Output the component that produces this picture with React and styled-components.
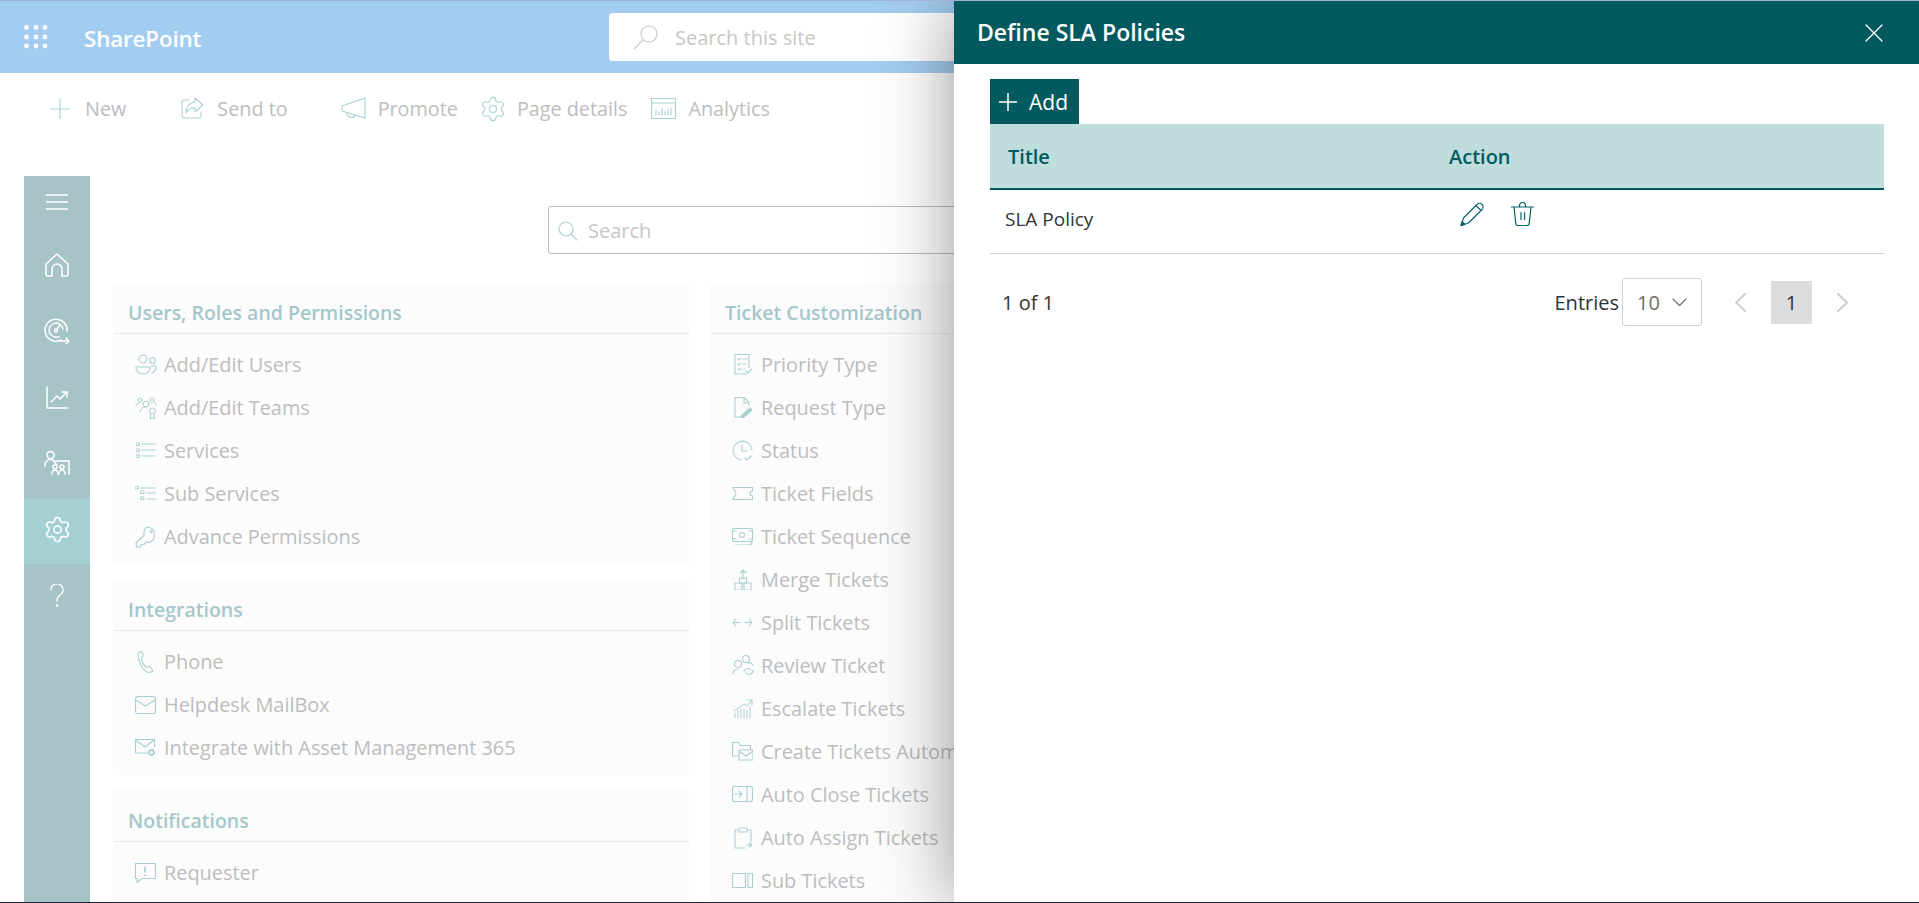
import React from 'react';
import styled, { createGlobalStyle } from 'styled-components';
import { Settings } from 'lucide-react';

const Global = createGlobalStyle`
  html, body { margin: 0; padding: 0; background: #fff; }
  * { box-sizing: border-box; }
  body { font-family: "Open Sans", "Noto Sans", sans-serif; }
`;

const Page = styled.div`
  position: relative;
  width: 1919px;
  height: 903px;
  overflow: hidden;
  background: #fff;
  border-top: 1px solid #9fb3d3;
  border-bottom: 1px solid #1c2233;
`;

const SuiteBar = styled.header`
  height: 72px;
  background: #a3cdf0;
  display: flex;
  align-items: center;
  padding-left: 24px;
`;
const Brand = styled.span`
  margin-left: 36px;
  margin-top: 2px;
  width: 119px;
  font-size: 22.3px;
  font-weight: 600;
  letter-spacing: -0.1px;
  color: #fff;
`;
const SiteSearch = styled.div`
  margin-left: 406px;
  width: 720px;
  height: 48px;
  border-radius: 4px;
  background: #fff;
  display: flex;
  align-items: center;
  padding-left: 24px;
  gap: 17px;
  font-size: 20px;
  color: #c6c6c6;
`;

const CommandBar = styled.nav`
  height: 71px;
  padding: 0 0 0 50px;
  display: flex;
  align-items: center;
  font-size: 19.8px;
  color: #bdbdbd;
`;
const Command = styled.span`
  display: flex;
  align-items: center;
  gap: ${p => p.$gap}px;
  margin-right: ${p => p.$after}px;
  color: #bdbdbd;
  svg { color: #a9cfd3; }
`;

const Main = styled.div`
  height: 758px;
  padding-top: 32px;
  padding-left: 24px;
  display: flex;
`;
const Rail = styled.aside`
  flex: none;
  width: 66px;
  height: 726px;
  background: #a6c4c6;
  display: flex;
  flex-direction: column;
  color: #fff;
`;
const RailItem = styled.div`
  height: ${p => (p.$first ? 58 : 66)}px;
  padding-bottom: ${p => (p.$first ? 6 : 4)}px;
  display: flex;
  align-items: center;
  justify-content: center;
  background: ${p => (p.$active ? '#a6cfd2' : 'transparent')};
`;

const Content = styled.section`
  flex: none;
  margin-left: 23px;
  width: 1200px;
`;
const FindBox = styled.div`
  margin-left: 435px;
  margin-top: 30px;
  width: 640px;
  height: 48px;
  border: 1px solid #bdbdbd;
  border-radius: 3px;
  display: flex;
  align-items: center;
  padding: 1px 0 0 9px;
  gap: 10px;
  font-size: 20px;
  color: #c6c6c6;
  svg { color: #a9cfd3; }
`;
const Columns = styled.div`
  margin-top: 28px;
  display: grid;
  grid-template-columns: 576px 576px;
  column-gap: 21px;
  align-items: start;
`;
const Stack = styled.div`
  display: flex;
  flex-direction: column;
  gap: 15px;
`;
const Card = styled.article`
  background: #fcfcfc;
  padding-bottom: ${p => p.$tail || 5}px;
`;
const CardTitle = styled.h3`
  margin: 0 0 10px;
  height: 52px;
  padding: 16px 0 0 15px;
  font-size: 19.5px;
  line-height: 29px;
  font-weight: 600;
  color: #a4c7ca;
  border-bottom: 1px solid #eaeaea;
`;
const Row = styled.div`
  height: 43px;
  padding: 0 0 2px 22px;
  display: flex;
  align-items: center;
  gap: 8px;
  font-size: 19.9px;
  color: #bdbdbd;
  white-space: nowrap;
  svg { color: #a9cfd3; flex: none; }
`;

const Panel = styled.aside`
  position: absolute;
  top: 0;
  bottom: 0;
  left: 954px;
  right: 0;
  background: #fff;
  box-shadow: 0 0 70px rgba(0, 0, 0, 0.42);
  display: flex;
  flex-direction: column;
`;
const PanelHead = styled.div`
  height: 63px;
  background: #025a5e;
  color: #fff;
  display: flex;
  align-items: center;
  justify-content: space-between;
  padding: 0 36px 0 23px;
`;
const PanelTitle = styled.h2`
  margin: 0 0 2px;
  font-size: 23px;
  font-weight: 600;
`;
const PanelBody = styled.div`
  padding: 15px 35px 0 36px;
`;
const AddButton = styled.button`
  display: flex;
  align-items: center;
  gap: 12px;
  height: 45px;
  width: 89px;
  padding: 0 0 0 9px;
  border: 0;
  background: #025a5e;
  color: #fff;
  font: 500 21px "Open Sans", sans-serif;
`;
const Table = styled.div``;
const HeadRow = styled.div`
  height: 66px;
  background: #bfdddc;
  border-bottom: 2px solid #025a5e;
  display: grid;
  grid-template-columns: 441px 1fr;
  align-items: center;
  padding: 0 0 0 18px;
  font-size: 20px;
  font-weight: 600;
  color: #025a5e;
`;
const BodyRow = styled.div`
  height: 64px;
  border-bottom: 1px solid #d0d0d0;
  display: grid;
  grid-template-columns: 455px 1fr;
  padding-left: 15px;
  font-size: 19px;
  color: #333;
`;
const CellText = styled.span`
  line-height: 58px;
`;
const Actions = styled.span`
  display: flex;
  gap: 27px;
  padding-top: 12px;
  color: #046166;
  svg { flex: none; }
`;
const Foot = styled.div`
  height: 48px;
  margin-top: 24px;
  display: flex;
  align-items: center;
  padding: 0 0 0 12px;
  font-size: 20px;
  color: #333;
`;
const Count = styled.span`
  flex: 1;
  padding-top: 1px;
`;
const EntriesLabel = styled.span`
  font-weight: 500;
  margin-right: 3px;
  padding-top: 1px;
`;
const PageSize = styled.div`
  width: 80px;
  height: 48px;
  border: 1px solid #d0d0d0;
  border-radius: 3px;
  display: flex;
  align-items: center;
  justify-content: space-between;
  padding: 0 14px;
  color: #6b6b6b;
`;
const Pager = styled.div`
  display: flex;
  align-items: center;
  margin-left: 33px;
  margin-right: 36px;
  color: #cfcfcf;
`;
const Current = styled.span`
  width: 41px;
  height: 43px;
  margin: 0 25px;
  background: #dcdcdc;
  color: #333;
  display: flex;
  align-items: center;
  justify-content: center;
`;

const Glyph = ({ size = 24, w, h, sw = 1.1, children, fill }) => (
  <svg
    width={w || size}
    height={h || size}
    viewBox={`0 0 ${w || size} ${h || size}`}
    fill={fill || 'none'}
    stroke="currentColor"
    strokeWidth={sw}
    strokeLinecap="round"
    strokeLinejoin="round"
  >
    {children}
  </svg>
);

const Waffle = () => (
  <svg width="24" height="24" viewBox="0 0 24 24" fill="#fff">
    {[2.5, 12, 21].map(y => [2.5, 12, 21].map(x => <circle key={`${x}${y}`} cx={x} cy={y} r="2.4" />))}
  </svg>
);

const I = {
  plus: <Glyph size={20}><path d="M10 .5v19M.5 10h19" /></Glyph>,
  send: <Glyph size={23}><path d="M8 3H3.500A2.500 2.500 0 0 0 1 5.500v13A2.500 2.500 0 0 0 3.500 21h14a2.500 2.500 0 0 0 2.500-2.500V15" /><path d="M14 1l8 7-8 7v-4c-4 0-7 1-9 5 0-6 3-10 9-11z" /></Glyph>,
  promote: <Glyph w={25} h={23}><path d="M24 1v20L1 14V9z" /><path d="M6 16c0 5 7 6 8 2" /></Glyph>,
  gear: <Settings size={28} strokeWidth={0.9} />,
  chart: <Glyph w={25} h={21}><rect x=".5" y=".5" width="24" height="20" /><path d="M.5 5h24M5 17v-5M8 17v-3M11 17v-6M14 17v-4M17 17v-6M20 17v-7" /></Glyph>,
  siteSearch: <Glyph size={25}><circle cx="16" cy="9" r="8" /><path d="M10 15L1 24" /></Glyph>,
  find: <Glyph size={20}><circle cx="8" cy="8" r="7" /><path d="M13 13l6 6" /></Glyph>,
  menu: <Glyph w={22} h={16} sw={1.3}><path d="M0 1h22M0 8h22M0 15h22" /></Glyph>,
  home: <Glyph size={24} sw={1.5}><path d="M1 11L12 1l11 10v10a2 2 0 0 1-2 2h-4v-7a5 5 0 0 0-10 0v7H3a2 2 0 0 1-2-2z" /></Glyph>,
  gauge: <Glyph size={26} sw={1.5}><path d="M17 22A11 11 0 1 1 23 13" /><path d="M15 18.500A7 7 0 1 1 19 11" /><circle cx="12" cy="12.500" r="1.500" /><path d="M13 11l3-4M16 23h9M22 20l3 3-3 3" /></Glyph>,
  trend: <Glyph size={23} sw={1.5}><path d="M1 1v21h21M5 16l6-6 3 3 7-7M16 6h5v5" /></Glyph>,
  people: <Glyph size={26} sw={1.500}><circle cx="6.500" cy="5" r="3.600" /><path d="M1 16a6 6 0 0 1 7.500-6.500l4 5" /><path d="M11 11h14v13M8 24c0-3 1.500-4 3-4s3 1 3 4M15 24c0-3 1.500-4 3-4s3 1 3 4" /><circle cx="11" cy="17" r="2" /><circle cx="18" cy="17" r="2" /></Glyph>,
  gearWhite: <Settings size={29} strokeWidth={1.3} />,
  help: <Glyph w={14} h={23} sw={1.3}><path d="M1 6a6 6 0 1 1 9 5c-2 1.500-3 2.500-3 6" /><circle cx="7" cy="21.500" r=".7" /></Glyph>,
  users: <Glyph size={22}><circle cx="8" cy="5" r="4" /><circle cx="17.500" cy="6.500" r="2.800" /><path d="M1 13h13a1 1 0 0 1 1 1c0 3-3 6-7 6s-7-3-7-6a1 1 0 0 1 0-1zM16 12h5c.8 2-1 6-4 7" /></Glyph>,
  teams: <Glyph size={22} sw={1}><circle cx="5" cy="3" r="2" /><circle cx="17" cy="3" r="2" /><circle cx="11" cy="7" r="3" /><path d="M1 9c0-2 1-3 3-3M21 8c0-1-.5-2-1.500-2.500M5 15c0-3 2-5 6-5" /><circle cx="17.500" cy="14" r="3" /><path d="M15.500 17v5l2-1.300 2 1.300v-5" /></Glyph>,
  services: <Glyph w={20} h={17} sw={1}><rect x=".5" y="1" width="3" height="2.500" /><rect x=".5" y="7" width="3" height="2.500" /><rect x=".5" y="13" width="3" height="2.500" /><path d="M6 2h13M6 8h13M6 14h13" /></Glyph>,
  sub: <Glyph w={21} h={15} sw={1}><rect x=".5" y=".5" width="3" height="2.500" /><rect x="6" y="5" width="3" height="2.500" /><rect x="6" y="11" width="3" height="2.500" /><path d="M6 2h15M12 7h9M12 13h9" /></Glyph>,
  key: <Glyph size={22}><path d="M13 1a8 8 0 0 1 1 15.500c-1 0-2-.3-2.500-.5L9 18.500H6V21H1.500L1 17l8-7.500C8.500 5 10 1 13 1z" /><circle cx="16" cy="5.500" r="1" /></Glyph>,
  phone: <Glyph w={17} h={22}><path d="M1 3c0-1 2-2.500 3.500-2.500l2 4-2 2.500c0 3 2.500 8 5 9.500l3-1 3.500 4c-1 2-3 2-4 2C5 20 1 9 1 3z" /></Glyph>,
  mail: <Glyph w={21} h={18}><rect x=".5" y=".5" width="20" height="17" rx="2.500" /><path d="M1 4l9.500 6L20 4" /></Glyph>,
  mailGear: <Glyph w={21} h={18}><path d="M13 14H.5V.5h19V8" /><path d="M.5 1l9.500 7L19 1" /><circle cx="16.500" cy="13.500" r="2.500" strokeWidth="2" strokeDasharray="1.500 1" /></Glyph>,
  alert: <Glyph w={21} h={20}><path d="M.5.5h20v15H7l-5 4v-4H.5z" /><path d="M10 4v5M10 12v.5" strokeWidth="1.600" /></Glyph>,
  checklist: <Glyph w={18} h={21}><path d="M13 20H1V.5h14v13" /><path d="M4 5l1 1 1.500-1.500M4 10l1 1 1.500-1.500M4 15l1 1 1.500-1.500M9 5h4M9 10h3M9 15h2M12 17l2 2 4-4" /></Glyph>,
  docEdit: <Glyph w={18} h={21}><path d="M6 20H1V.5h9l5 5v3M10 1v5h5" /><path d="M7 19l9-8 2 2-9 8H7z" fill="currentColor" /></Glyph>,
  clock: <Glyph size={21}><path d="M9 20A9.500 9.500 0 1 1 20 10" /><path d="M10 5v6h5M13 18l2 2 4-4" /></Glyph>,
  ticket: <Glyph w={21} h={13}><path d="M.5.5h20v3.500a2.500 2.500 0 0 0 0 5v3.500H.5l3-4.500a3 3 0 0 0 0-3z" /></Glyph>,
  money: <Glyph w={21} h={17}><rect x=".5" y=".5" width="20" height="13" rx="2" /><circle cx="10" cy="7" r="2.500" /><path d="M3 17h14a3 3 0 0 0 3-3M4 3H1M4 11H1M17 3h3M17 11h3" /></Glyph>,
  merge: <Glyph w={18} h={21}><path d="M9 1v9M6 4l3-3 3 3" /><rect x="5.500" y="9" width="7" height="5" /><rect x="1" y="14" width="7" height="7" /><rect x="10" y="14" width="7" height="7" /></Glyph>,
  split: <Glyph w={21} h={9}><path d="M1 4.500h7M4 1L1 4.500 4 8M13 4.500h7M17 1l3 3.500L17 8" /></Glyph>,
  review: <Glyph size={22}><circle cx="14" cy="4" r="3.500" /><circle cx="6" cy="9" r="3.500" /><path d="M1 19c0-3 2-5 5-5M21 10c-1-2-3-3-6-2M12 17a4 4 0 0 1 7-2M21 15a4 4 0 0 1-7 3" /></Glyph>,
  escalate: <Glyph size={20} sw={1}><path d="M1 12L11 5l3 2 5-6M14 1h5v5M2 19v-5M5 19v-7M8 19v-9M11 19v-9M14 19v-8M17 19V8" /></Glyph>,
  folderMail: <Glyph w={21} h={19}><path d="M5 14H.5V.5h6l2 3h10V7" /><rect x="7" y="8" width="14" height="10" /><path d="M7 9l7 5 7-5" /></Glyph>,
  close: <Glyph w={21} h={17}><rect x=".5" y=".5" width="20" height="15" rx="2" /><path d="M15 1v14M3 8h7M7 5l3 3-3 3" /></Glyph>,
  clip: <Glyph w={18} h={22}><path d="M5 3H1v18h10M13 3h4v12M5 1h8v4H5zM13 18h5M15 16l3 2-3 2" /></Glyph>,
  panel: <Glyph w={21} h={15}><rect x=".5" y=".5" width="13" height="14" /><rect x="16" y=".5" width="4.500" height="14" /></Glyph>,
  pencil: <Glyph w={24} h={24} sw={1.100}><path d="M1 23.500l2.500-7.500L17 2.500a3.500 3.500 0 0 1 5 5L8.500 21z" /><path d="M16 3.500l5 5" /><path d="M1 23.500l1.200-4 2.800 2.800z" fill="currentColor" /></Glyph>,
  trash: <Glyph w={23} h={24} sw={1.200}><path d="M.5 5h22M3 5l1.800 16.500c.1 1.200 1 2 2.200 2h9c1.200 0 2.100-.8 2.200-2L20 5M8.500 5V3.500a3 3 0 0 1 6 0V5M10 10.500v7M13.500 10.500v7" /></Glyph>,
  x: <Glyph w={18} h={18} sw={1.300}><path d="M1 1l16 16M17 1L1 17" /></Glyph>,
  add: <Glyph size={18} sw={1.500}><path d="M9 0v18M0 9h18" /></Glyph>,
  down: <Glyph w={15} h={9}><path d="M1 1l6.500 6.500L14 1" /></Glyph>,
  left: <Glyph w={11} h={19} sw={2}><path d="M10 1L1 9.500 10 18" /></Glyph>,
  right: <Glyph w={11} h={19} sw={2}><path d="M1 1l9 8.500L1 18" /></Glyph>,
};

const commands = [
  ['plus', 'New', 15, 55],
  ['send', 'Send to', 13, 53],
  ['promote', 'Promote', 12, 21],
  ['gear', 'Page details', 10, 24],
  ['chart', 'Analytics', 12, 0],
];
const rail = ['home', 'gauge', 'trend', 'people', 'gearWhite', 'help'];
const sections = [
  ['Users, Roles and Permissions', 5, [
    ['users', 'Add/Edit Users'], ['teams', 'Add/Edit Teams'], ['services', 'Services'],
    ['sub', 'Sub Services'], ['key', 'Advance Permissions'],
  ]],
  ['Integrations', 5, [
    ['phone', 'Phone'], ['mail', 'Helpdesk MailBox'], ['mailGear', 'Integrate with Asset Management 365'],
  ]],
  ['Notifications', 30, [['alert', 'Requester']]],
];
const tickets = [
  ['checklist', 'Priority Type'], ['docEdit', 'Request Type'], ['clock', 'Status'], ['ticket', 'Ticket Fields'],
  ['money', 'Ticket Sequence'], ['merge', 'Merge Tickets'], ['split', 'Split Tickets'], ['review', 'Review Ticket'],
  ['escalate', 'Escalate Tickets'], ['folderMail', 'Create Tickets Automatically'], ['close', 'Auto Close Tickets'],
  ['clip', 'Auto Assign Tickets'], ['panel', 'Sub Tickets'],
];

const IconSlot = styled.span`
  width: 21px;
  height: 24px;
  flex: none;
  display: flex;
  align-items: center;
  justify-content: center;
`;

const Item = ({ icon, label }) => (
  <Row>
    <IconSlot>{I[icon]}</IconSlot>
    {label}
  </Row>
);

export default function App() {
  return (
    <Page>
      <Global />
      <SuiteBar>
        <Waffle />
        <Brand>SharePoint</Brand>
        <SiteSearch>{I.siteSearch}Search this site</SiteSearch>
      </SuiteBar>
      <CommandBar>
        {commands.map(([icon, label, gap, after]) => (
          <Command key={label} $gap={gap} $after={after}>{I[icon]}{label}</Command>
        ))}
      </CommandBar>
      <Main>
        <Rail>
          <RailItem $first>{I.menu}</RailItem>
          {rail.map(icon => (
            <RailItem key={icon} $active={icon === 'gearWhite'}>{I[icon]}</RailItem>
          ))}
        </Rail>
        <Content>
          <FindBox>{I.find}Search</FindBox>
          <Columns>
            <Stack>
              {sections.map(([title, tail, rows]) => (
                <Card key={title} $tail={tail}>
                  <CardTitle>{title}</CardTitle>
                  {rows.map(([icon, label]) => <Item key={label} icon={icon} label={label} />)}
                </Card>
              ))}
            </Stack>
            <Card>
              <CardTitle>Ticket Customization</CardTitle>
              {tickets.map(([icon, label]) => <Item key={label} icon={icon} label={label} />)}
            </Card>
          </Columns>
        </Content>
      </Main>
      <Panel>
        <PanelHead>
          <PanelTitle>Define SLA Policies</PanelTitle>
          {I.x}
        </PanelHead>
        <PanelBody>
          <AddButton>{I.add}Add</AddButton>
          <Table>
            <HeadRow><span>Title</span><span>Action</span></HeadRow>
            <BodyRow>
              <CellText>SLA Policy</CellText>
              <Actions>{I.pencil}{I.trash}</Actions>
            </BodyRow>
          </Table>
          <Foot>
            <Count>1 of 1</Count>
            <EntriesLabel>Entries</EntriesLabel>
            <PageSize>10{I.down}</PageSize>
            <Pager>{I.left}<Current>1</Current>{I.right}</Pager>
          </Foot>
        </PanelBody>
      </Panel>
    </Page>
  );
}
